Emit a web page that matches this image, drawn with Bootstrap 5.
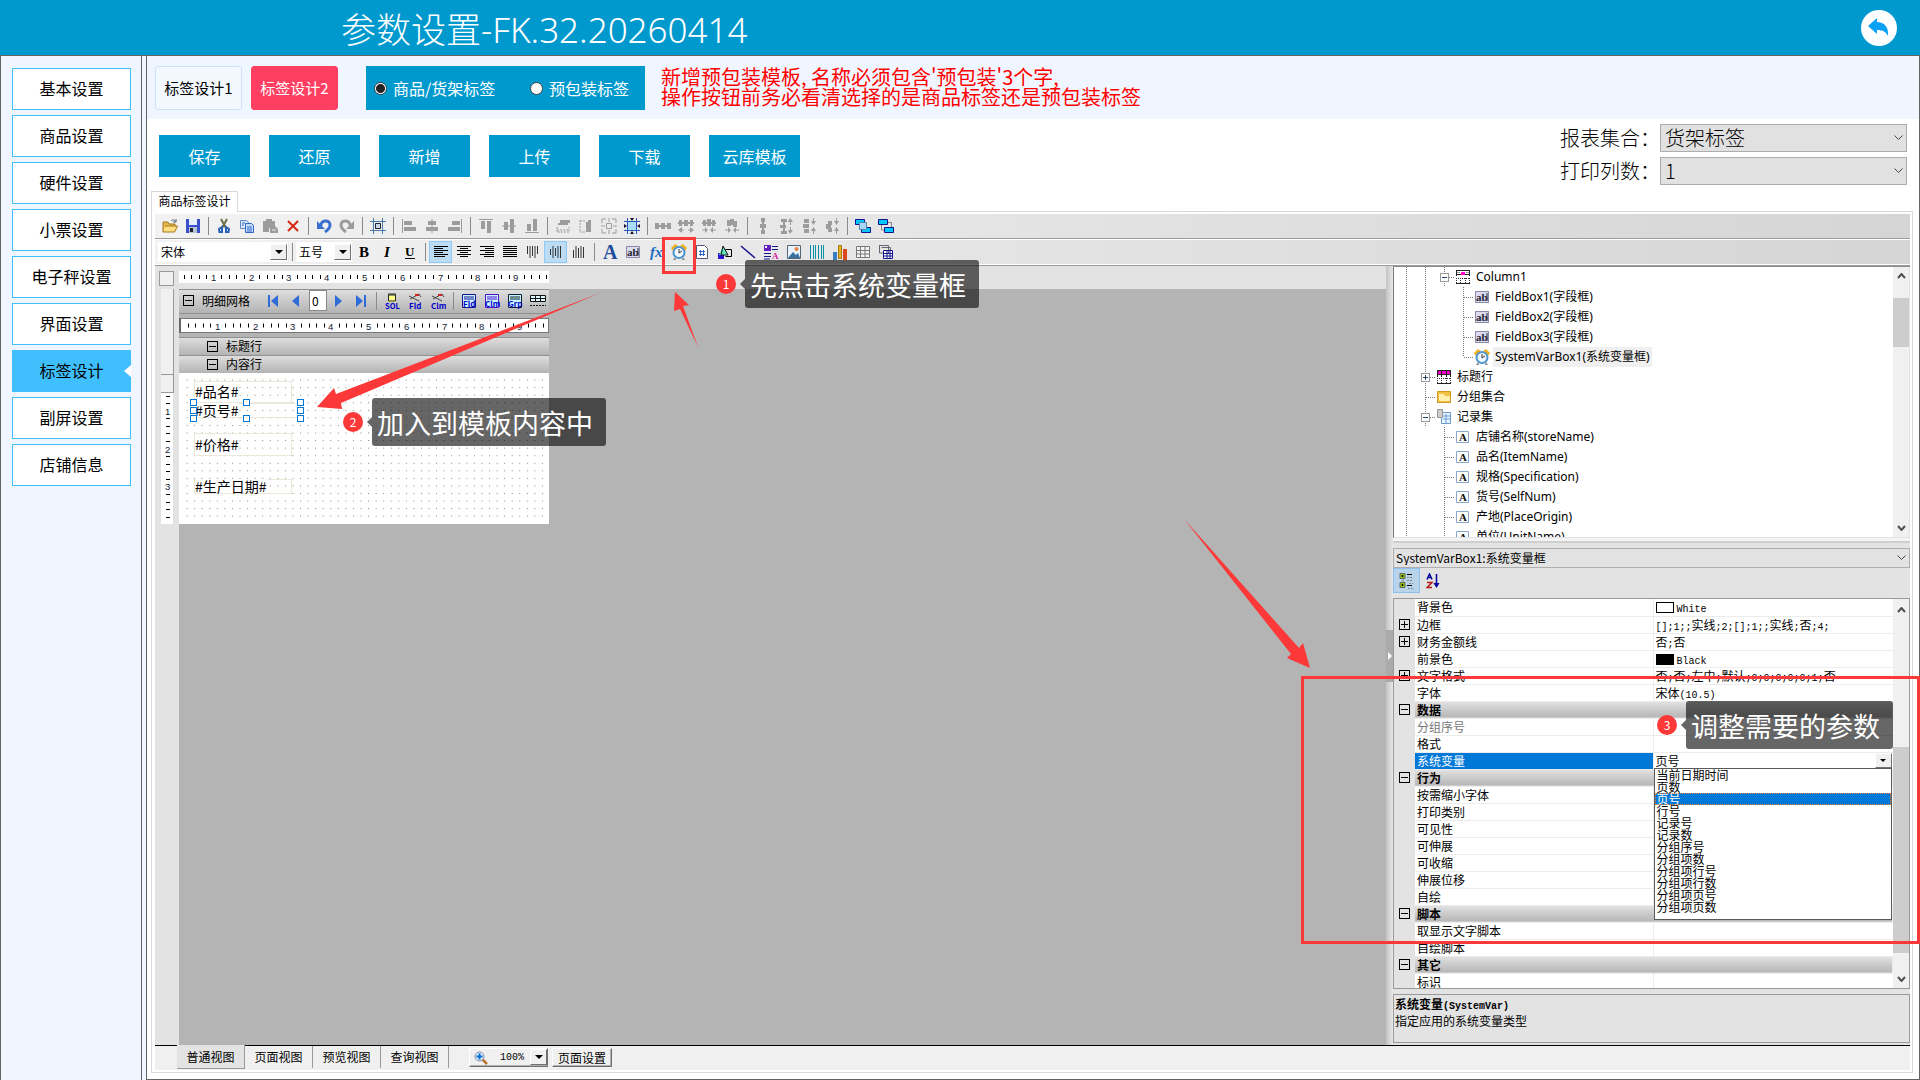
<!DOCTYPE html>
<html lang="zh-CN">
<head>
<meta charset="utf-8">
<meta name="viewport" content="width=device-width, initial-scale=1">
<title>参数设置</title>
<link rel="stylesheet" href="https://cdn.jsdelivr.net/npm/bootstrap@5.3.0/dist/css/bootstrap.min.css">
<style>
:root{--blue:#0099ce;--pale:#f0f6ff;--edge:#646464;--line:#d9d9d9;--face:#e3e3e3;--red:#fc3838}
body{font-family:"Noto Sans CJK SC",sans-serif;font-size:12px;line-height:16px;color:#000;background:var(--pale);overflow:hidden}
button,select,input{font-family:inherit;color:inherit}
button{padding:0;border:0;background:none}
svg{display:block;flex:none}
.topbar{height:56px;background:var(--blue);border-bottom:1px solid var(--edge);padding:0 23px 0 341px}
.topbar h1{font:300 35px/48px "Noto Sans","Noto Sans CJK SC",sans-serif;color:#fff;margin:4px 0 0}
.side{width:142px;background:var(--pale);border:solid var(--edge);border-width:0 1px;padding:12px 10px 0 11px;gap:5px}
.side a{height:42px;line-height:38px;border:1px solid #40bfff;background:#fff;color:#000;text-align:center;font-size:16px;text-decoration:none;width:119px;position:relative}
.side a.on{background:#40bfff}
.side a.on::after{content:"";position:absolute;right:-1px;top:14px;border:6px solid transparent;border-right:7px solid #fff;border-left:0}
.pane{margin-left:4px;border:1px solid var(--edge);border-top:0;background:#fff}
.strip{background:var(--pale);height:63px;padding:10px 8px 0}
.plan{width:87px;height:44px;border:1px solid #cfe0fb;border-radius:3px;font-size:15px;background:#f3f8ff}
.plan.on{background:#ff3f62;border-color:#ff3f62;color:#fff;margin-left:9px}
.kind{height:44px;width:279px;background:var(--blue);color:#fff;font-size:16px;margin-left:28px;padding-left:8px}
.kind label{display:flex;align-items:center;gap:6px;white-space:nowrap}
.kind input{appearance:none;width:13px;height:13px;border:1px solid #444;border-radius:50%;background:#fff;margin:0}
.kind input:checked{background:radial-gradient(#222 0 4px,#fff 5px)}
.warn{color:#f00;font-size:20px;line-height:20px;margin:1px 0 0 16px;white-space:nowrap}
.acts{gap:19px;padding:16px 0 0 12px}
.acts button{width:91px;height:42px;background:var(--blue);color:#fff;font-size:16px}
.opts{font-size:20px;font-weight:300;line-height:28px;gap:5px;padding:5px 12px 0 0}
.opts label{width:100px}
.opts .pick{width:247px;height:28px}
.pick{position:relative}
.pick select{appearance:none;width:100%;height:100%;border:1px solid #adadad;border-radius:0;background:#e1e1e1;padding:0 4px;font-size:inherit;font-weight:inherit;line-height:1.2}
.pick svg{position:absolute;right:4px;top:50%;margin-top:-3px;pointer-events:none}
.tabhead{padding-left:4px}
.tabhead a{display:block;width:87px;height:21px;border:1px solid var(--line);border-bottom:0;background:#fff;color:#000;text-decoration:none;text-align:center;line-height:18px;white-space:nowrap;margin-bottom:-1px;position:relative}
.tabbox{border:1px solid var(--line);margin:0 6px 6px 4px;padding:2px 2px 2px 3px}
.tools{height:26px;border-bottom:1px solid #9b9b9b;box-shadow:inset 0 -1px #fff;background:linear-gradient(90deg,#f2f2f2,#d5d5d5);padding:0 0 2px 3px}
.tools.r1{border-bottom:1px solid #fff;box-shadow:inset 0 -1px #9b9b9b}
.tb{width:23px;height:22px;display:flex;align-items:center;justify-content:center;flex:none}
.tb.on{background:#bcdcf4;border:1px solid #90c8f6}
.sp{width:8px;flex:none;display:flex;justify-content:center}
.sp::after{content:"";width:1px;height:18px;background:#8a8a8a}
.combo{background:#fff;height:20px;display:flex;position:relative;flex:none}
.combo select{appearance:none;border:0;background:#fff;width:100%;padding:0 3px;font-size:12px}
.arw{position:absolute;right:1px;top:2px;width:17px;height:16px;background:#f0f0f0;border:1px solid;border-color:#fff #707070 #707070 #fff;display:flex;align-items:center;justify-content:center;pointer-events:none}
.arw::after{content:"";border:4px solid transparent;border-top-color:#000;border-bottom:0}
.work{background:#b4b4b4;min-width:0}
.rtop{background:var(--face);height:23px;padding:5px 0 0 4px;gap:5px}
.corner{width:15px;height:15px;background:#f0f0f0;border:1px solid #9a9a9a}
.rail{width:24px;background:var(--face);padding:0 6px;flex:none}
.rail div{background:#f0f0f0;border:solid #9a9a9a;border-width:0 1px 1px 0;width:13px}
.report{width:370px;flex:none}
.band{background:linear-gradient(#dedede,#b3b3b3);border-top:1px solid #909090;height:18px;line-height:16px;padding:0 0 1px 28px;gap:8px}
.band.head{height:25px;padding:0 0 2px 4px;gap:0;border-bottom:1px solid #909090;overflow:hidden}
.cap{width:80px;white-space:nowrap}
.tg{width:11px;height:11px;border:1px solid #000;position:relative;flex:none;display:block;padding:0}
.tg::before,.tg.plus::after{content:"";position:absolute;background:#000;left:1px;right:1px;top:4px;height:1px}
.tg.plus::after{left:4px;right:4px;top:1px;bottom:1px;height:auto}
.rec{width:18px;height:21px;border:1px solid #888;border-radius:0;font-size:12px;padding:0 2px;line-height:14px;margin:0 -1px 0 2px}
.ruler2{background:#fff;border:1px solid #777;border-left:2px solid #666;margin:4px 0;height:15px;width:370px}
.sheet{background:#fff;height:151px;position:relative}
.fld{position:absolute;left:15px;width:98px;border:1px solid #ebe7da;font-size:14px;padding:0 0 2px;display:flex;align-items:center;line-height:14px;background:transparent}
.fld span{background:#fff}
.sheet i{position:absolute;width:7px;height:7px;border:1px solid #0078d7;background:#fff}
.vsplit{width:7px;background:linear-gradient(90deg,#c4c4c4,#e8e8e8);display:flex;align-items:center}
.side2{width:517px;background:var(--face);border-top:1px solid #8c8c8c;flex:none;padding-bottom:2px}
.tree{height:271px;background:#fff;border:1px solid #777;border-color:#777 var(--face) var(--face) #777;border-top:0;overflow:hidden}
.tree ul{margin:0;padding:0 0 0 3px;list-style:none}
.tree li{height:20px;display:flex;align-items:center;white-space:nowrap;font-family:"Noto Sans","Noto Sans CJK SC",sans-serif}
.tree .ti{margin:0 3px 0 1px;width:16px}
.tree .tx{padding:0 2px;line-height:20px}
.tree .tx.on{background:#f0f0f0}
.bar{width:16px;background:#f0f0f0;flex:none;display:flex;flex-direction:column;align-items:center;padding:6px 0}
.bar b{width:16px;background:#cdcdcd}
.hsplit{height:10px;border-top:3px solid #f4f4f4;background:linear-gradient(#cfcfcf 0 2px,var(--face) 2px)}
.side2 .pick{height:20px}
.side2 .pick select{background:#e3e3e3;padding:0 2px;font-size:12px}
.pt{height:30px}
.pt button{width:27px;height:25px;display:flex;align-items:center;justify-content:center}
.pt .on{background:#b8d4ea;border:1px solid #8cc0ee}
.props{border:1px solid #9a9a9a;background:#fff;overflow:hidden;flex:1 1 0;min-height:0;position:relative}
.props table{width:100%;table-layout:fixed;border-collapse:collapse}
.props td{height:17px;padding:0 0 0 2px;line-height:16px;border-bottom:1px solid #ececec;white-space:nowrap;overflow:visible}
.props td.g{background:var(--face);border:0;width:21px;padding-left:5px}
.props td.n{width:238px;border-right:1px solid #ececec}
.props tr.cat td.n{background:linear-gradient(#e2e2e2,#b5b5b5);font-weight:700}
.props tr.sel td.n{background:#0078d7;color:#fff}
.props tr.dim td.n{color:#777}
.lat{font-family:"Liberation Mono",monospace;font-size:10px;line-height:10px}
.sw{display:inline-block;width:18px;height:11px;border:1px solid #000;vertical-align:-1px;margin-right:3px}
.vs{position:relative;display:block;width:237px}
.vs select{appearance:none;border:0;width:100%;height:16px;padding:0;background:#fff;font-size:12px;line-height:16px;display:block}
.vs .arw{top:0;height:15px}
.vs .arw::after{border-width:3px;border-bottom:0}
.menu{position:absolute;left:-2px;top:15px;width:238px;height:152px;border:1px solid #5a5a5a;background:#fff;color:#000;margin:0;padding:0;list-style:none;z-index:2}
.menu li{height:12px;line-height:12px;padding-left:2px}
.menu li.on{background:#0078d7;color:#fff;outline:1px dotted #f08030;outline-offset:-1px}
.desc{height:49px;border:1px solid #9a9a9a;margin-top:5px;padding:0 1px;line-height:17px}
.foot{background:#f0f0f0;border-top:1px solid #000;height:25px}
.foot .vt{height:22px;width:68px;border-right:1px solid #9a9a9a;line-height:20px;margin:0}
.foot .vt.on{background:var(--face);margin:-1px 0 0 22px;height:24px;border-bottom:1px solid #9a9a9a}
.raise{background:#f0f0f0;border:1px solid;border-color:#fff #707070 #707070 #fff;height:19px;box-shadow:inset -1px -1px #b0b0b0;margin-top:2px;line-height:16px}
.notes{position:absolute;inset:0;pointer-events:none;z-index:5;overflow:hidden}
.notes>svg{position:absolute;left:0;top:0}
.frame{position:absolute;border:3px solid var(--red)}
.tip{position:absolute;display:flex;align-items:center}
.tip b{width:20px;height:20px;border-radius:50%;background:var(--red);color:#fff;font-weight:400;line-height:20px;text-align:center}
.tip::before{content:"";order:1;border:5px solid transparent;border-right-color:rgba(0,0,0,.6);border-left:0;margin-left:4px}
.tip span{order:2;height:48px;line-height:50px;border-radius:3px;background:rgba(0,0,0,.6);color:#fff;font-size:27px;padding:0 13px 0 5px;white-space:nowrap}
</style>
<script src="https://cdn.jsdelivr.net/npm/bootstrap@5.3.0/dist/js/bootstrap.bundle.min.js"></script>
</head>
<body class="vh-100 d-flex flex-column position-relative">
<header class="topbar d-flex justify-content-between align-items-center flex-shrink-0">
  <h1>参数设置-FK.32.20260414</h1>
  <button aria-label="返回"><svg width="36" height="36" viewBox="0 0 36 36"><circle cx="18" cy="18" r="18" fill="#fff"/><path d="M7 16 16 8v4c7 0 12 5 11 14-2-4-5-6-11-6v4z" fill="#0aa1f5"/></svg></button>
</header>
<main class="d-flex flex-grow-1" style="min-height:0">
  <nav class="side d-flex flex-column flex-shrink-0">
    <a href="#">基本设置</a><a href="#">商品设置</a><a href="#">硬件设置</a><a href="#">小票设置</a><a href="#">电子秤设置</a><a href="#">界面设置</a><a href="#" class="on">标签设计</a><a href="#">副屏设置</a><a href="#">店铺信息</a>
  </nav>
  <section class="pane flex-grow-1 d-flex flex-column" style="min-width:0">
    <div class="strip d-flex">
      <button class="plan">标签设计1</button><button class="plan on">标签设计2</button>
      <div class="kind d-flex" role="radiogroup">
        <label><input type="radio" name="kind" checked>商品/货架标签</label>
        <label class="ms-auto me-3"><input type="radio" name="kind">预包装标签</label>
      </div>
      <div class="warn">新增预包装模板, 名称必须包含'预包装'3个字,<br>操作按钮前务必看清选择的是商品标签还是预包装标签</div>
    </div>
    <div class="d-flex justify-content-between" style="height:72px">
      <div class="acts d-flex"><button>保存</button><button>还原</button><button>新增</button><button>上传</button><button>下载</button><button>云库模板</button></div>
      <div class="opts d-flex flex-column">
        <div class="d-flex"><label for="s1">报表集合：</label><div class="pick"><select id="s1"><option>货架标签</option></select><svg width="9" height="6"><path d="M.5.5l4 4 4-4" fill="none" stroke="#444"/></svg></div></div>
        <div class="d-flex"><label for="s2">打印列数：</label><div class="pick"><select id="s2"><option>1</option></select><svg width="9" height="6"><path d="M.5.5l4 4 4-4" fill="none" stroke="#444"/></svg></div></div>
      </div>
    </div>
    <div class="tabhead"><a href="#">商品标签设计</a></div>
    <div class="tabbox flex-grow-1 d-flex flex-column" style="min-height:0">
      <div class="tools r1 d-flex align-items-center flex-shrink-0" id="t1"></div>
      <div class="tools d-flex align-items-center flex-shrink-0">
        <div class="combo" style="width:130px"><select aria-label="字体"><option>宋体</option></select><span class="arw"></span></div>
        <span class="sp"></span>
        <div class="combo" style="width:56px"><select aria-label="字号"><option>五号</option></select><span class="arw"></span></div>
        <div class="d-flex align-items-center" id="t2"></div>
      </div>
      <div class="d-flex flex-grow-1" style="min-height:0">
        <div class="work flex-grow-1 d-flex flex-column">
          <div class="rtop d-flex"><div class="corner"></div><div id="ru1"></div></div>
          <div class="d-flex flex-grow-1">
            <div class="rail"><div style="height:86px"></div><div style="height:18px"></div><span id="ru3"></span></div>
            <div class="report">
              <div class="band head d-flex align-items-center"><button class="tg" aria-label="折叠"></button><span class="ms-2 cap">明细网格</span><span id="t3" class="d-flex align-items-center"></span></div>
              <div class="ruler2" id="ru2"></div>
              <div class="band d-flex align-items-center"><button class="tg" aria-label="折叠"></button><span>标题行</span></div>
              <div class="band d-flex align-items-center"><button class="tg" aria-label="折叠"></button><span>内容行</span></div>
              <div class="sheet">
                <svg width="370" height="151"><defs><pattern id="dots" width="7.56" height="7.56" x="7.6" y="6.6" patternUnits="userSpaceOnUse"><rect width="1" height="1" fill="#8f8880"/></pattern></defs><rect x="7" y="6" width="363" height="141" fill="url(#dots)"/></svg>
                <div class="fld" style="top:8px;height:22px"><span>#品名#</span></div>
                <div class="fld" style="top:30px;height:15px;width:107px"><span>#页号#</span></div>
                <div class="fld" style="top:60px;height:23px"><span>#价格#</span></div>
                <div class="fld" style="top:106px;height:15px"><span>#生产日期#</span></div>
                <i style="left:11px;top:26px"></i><i style="left:64px;top:26px"></i><i style="left:118px;top:26px"></i><i style="left:11px;top:34px"></i><i style="left:118px;top:34px"></i><i style="left:11px;top:42px"></i><i style="left:64px;top:42px"></i><i style="left:118px;top:42px"></i>
              </div>
            </div>
          </div>
        </div>
        <div class="vsplit"><svg width="7" height="52"><rect width="7" height="52" fill="#aaa"/><path d="M2 22v8l4-4z" fill="#fff"/></svg></div>
        <aside class="side2 d-flex flex-column">
          <div class="tree d-flex flex-shrink-0"><ul class="flex-grow-1" id="tree"></ul>
            <div class="bar justify-content-between"><svg width="9" height="6"><path d="M1 5l3.500-4 3.500 4" fill="none" stroke="#505050" stroke-width="2"/></svg><b style="height:49px;margin-bottom:160px"></b><svg width="9" height="6"><path d="M1 1l3.500 4L8 1" fill="none" stroke="#505050" stroke-width="2"/></svg></div></div>
          <div class="hsplit flex-shrink-0"></div>
          <div class="pick flex-shrink-0"><select aria-label="对象"><option>SystemVarBox1:系统变量框</option></select><svg width="9" height="6"><path d="M.5.5l4 4 4-4" fill="none" stroke="#444"/></svg></div>
          <div class="pt d-flex flex-shrink-0"><button class="on" aria-label="分类"><svg width="16" height="18"><path d="M4 3v12" stroke="#888"/><path d="M1 1.500h5v5H1zM1 10.500h5v5H1z" fill="#9c0" stroke="#666"/><path d="M2.500 4h2M3.500 3v2M2.500 13h2M3.500 12v2" stroke="#000"/><path d="M8 2.500h5M8 13.500h5" stroke="#000"/><path d="M8 5.500h6M8 8.500h6M10 11.500h4M9 16.500h5" stroke="#888" stroke-dasharray="2 1"/></svg></button>
          <button aria-label="排序"><svg width="15" height="16"><path d="M1 6.500 3.500 1 6 6.500M2 4.500h3" fill="none" stroke="#00009c" stroke-width="1.500"/><path d="M1 9.500h5l-5 5h5" fill="none" stroke="#b01818" stroke-width="1.500"/><path d="M10.500 1v12" stroke="#00009c" stroke-width="1.500" /><path d="M7.500 10h6l-3 5z" fill="#00009c"/></svg></button></div>
          <div class="props d-flex"><div class="flex-grow-1"><table><tbody id="props"></tbody></table></div>
            <div class="bar"><svg width="9" height="6" style="margin-top:2px"><path d="M1 5l3.500-4 3.500 4" fill="none" stroke="#505050" stroke-width="2"/></svg><b style="height:206px;margin-top:134px"></b><svg class="mt-auto" width="9" height="6"><path d="M1 1l3.500 4L8 1" fill="none" stroke="#505050" stroke-width="2"/></svg></div></div>
          <div class="desc flex-shrink-0"><strong>系统变量<span class="lat">(SystemVar)</span></strong><br>指定应用的系统变量类型</div>
        </aside>
      </div>
      <div class="foot d-flex flex-shrink-0 align-items-start">
        <button class="vt on">普通视图</button><button class="vt">页面视图</button><button class="vt">预览视图</button><button class="vt">查询视图</button>
        <div class="raise d-flex align-items-center position-relative" style="width:79px;margin-left:20px"><svg class="ms-1" width="14" height="14"><path d="M8 8l5 5" stroke="#b87830" stroke-width="2.500"/><circle cx="5.500" cy="5.500" r="4.500" fill="#d8ecfa" stroke="#88a"/><path d="M2.500 5.500h6M5.500 2.500v6" stroke="#0a6fd0" stroke-width="2"/></svg><span class="lat ms-2 ps-1">100%</span><span class="arw" style="top:0;right:0"></span></div>
        <button class="raise ms-1" style="width:60px">页面设置</button>
      </div>
    </div>
  </section>
</main>
<div class="notes">
  <svg width="1920" height="1080" fill="#fc3838"><path d="M675 292 689 305 683 306 698 347 680 309 674 311z"/><path d="M317 407 334 388 336 394 600 293 341 403 342 409z"/><path d="M1310 668 1303 643 1299 648 1184 519 1291 654 1287 658z"/></svg>
  <div class="frame" style="left:662px;top:237px;width:34px;height:37px"></div>
  <div class="frame" style="right:0;top:676px;width:619px;height:268px"></div>
  <div class="tip" style="left:716px;top:260px"><b>1</b><span>先点击系统变量框</span></div>
  <div class="tip" style="left:343px;top:398px"><b>2</b><span>加入到模板内容中</span></div>
  <div class="tip" style="right:27px;top:701px"><b>3</b><span>调整需要的参数</span></div>
</div>
<script>
const g='#9c9c9c',n='#14148c';
const F=(d,c)=>`<path d="${d}" fill="${c}"/>`,S=(d,c,w=1)=>`<path d="${d}" fill="none" stroke="${c}" stroke-width="${w}"/>`;
const T=(x,y,s,c,t,e='')=>`<text x="${x}" y="${y}" font-size="${s}" fill="${c}" ${e}>${t}</text>`;
const serif='font-family="Liberation Serif" font-weight="700"';
const lines=a=>a.map((w,i)=>S(`M${w[0]} ${2.5+i*2}H${w[1]}`,'#000')).join('');
const bars=(a,c='#333')=>a.map((w,i)=>S(`M${2.5+i*2.5} ${w[0]}V${w[1]}`,c)).join('');
const I={
open:F('M1 4h5l1 2h6v8H1z','#e8b84a')+F('M3 8h13l-3 6H1z','#ffdf80')+S('M3 8h12.500l-3 6H1V4h5l1 2h6v2','#a07820')+S('M9 3c2-2 4-1 5 1m0-3v3h-3','#567'),
save:F('M1 1h14v14H1z','#3a50c8')+F('M4 1h8v6H4z','#e8f0ff')+F('M4 9h8v6H4z','#b8c4d8')+F('M5 10h3v4H5z','#223'),
cut:S('M5 1l5 9M11 1 6 10','#6a7040',2)+S('M3 11l3-2v5H3.500zM13 11l-3-2v5h2.500z','#2860b8',2),
copy:F('M1 2h7l2 2v7H1z','#dce9fb')+S('M1.500 2.500h6l2 2v6h-8z','#6088c8')+F('M6 5h7l2 2v8H6z','#c4dcff')+S('M6.500 5.500h6l2 2v7h-8zM8 9h5M8 11h5M8 13h5M3 5h3M3 7h2','#3468c0'),
paste:F('M1 3h3V1h6v2h3v5h-4l-2 3v3H1z',g)+F('M8 8h5l3 3v4H8z',g)+S('M10 12h4','#eee'),
del:S('M3 3l10 10M13 3 3 13','#d82810',2),
undo:S('M5 8c-1-6 9-7 9-1 0 3-2 5-5 7','#3a70d0',3)+F('M1 3v8h8z','#3a70d0'),
redo:S('M11 8c1-6-9-7-9-1 0 3 2 5 5 7',g,3)+F('M15 3v8H7z',g),
grid:S('M3.500 0v16M12.500 0v16M0 3.500h16M0 12.500h16','#4878a8')+F('M5 5h6v6H5z','#c8d8e8')+S('M5.500 5.500h5v5h-5z','#223'),
al:S('M1.500 1v14',g)+F('M3 3h8v4H3zM3 9h12v4H3z',g), ac:S('M8 1v14',g)+F('M4 3h8v4H4zM2 9h12v4H2z',g), ar:S('M14.500 1v14',g)+F('M5 3h8v4H5zM1 9h12v4H1z',g),
at:S('M1 1.500h14',g)+F('M3 3h4v8H3zM9 3h4v12H9z',g), am:S('M1 8h14',g)+F('M3 4h4v8H3zM9 1h4v14H9z',g), ab:S('M1 14.500h14',g)+F('M3 6h4v7H3zM9 1h4v12H9z',g),
sw:F('M5 2h10v3H5zM3 5h10v2H3z',g)+S('M2 9v5h12V9M2 12h12',g).replace('/>',' stroke-dasharray="2 1"/>'),
sh:F('M10 2h3v12h-3zM8 4h2v10H8z',g)+S('M2 2v12h5M2 3h6',g).replace('/>',' stroke-dasharray="2 1"/>'),
sb:S('M1 5V1h4M11 1h4v4M15 11v4h-4M5 15H1v-4M5.500 5.500h5v5h-5zM8 0v4M8 12v4M0 8h4M12 8h4',g),
sz:F('M3 3h10v10H3z','#a8dcf8')+S('M3.500 0v16M12.500 0v16M0 3.500h16M0 12.500h16','#2858b8')+F('M6 0h4l-2 3zM6 16h4l-2-3zM0 6v4l3-2zM16 6v4l-3-2z','#113'),
h1:F('M0 5h4v6H0zM6 5h4v6H6zM12 5h4v6h-4zM0 7h16v2H0z',g),
h2:F('M1 2h3v6H1zM6 2h4v6H6zM12 2h3v6h-3zM0 4h16v2H0zM0 12l4-3v6zM16 12l-4-3v6z',g)+S('M2 12h4M10 12h4',g),
h3:F('M2 2h3v6H2zM6 1h4v7H6zM11 2h3v6h-3zM1 4h14v2H1zM7 12 4 9v6zM9 12l3-3v6z',g)+S('M1 12h5M10 12h5',g),
h4:F('M3 2h4v6H3zM6 1h4v6H6zM9 3h4v6H9zM7 12 4 9v6zM9 12l3-3v6z',g)+S('M1 12h5M10 12h5',g),
v1:F('M6 0h4v4H6zM5 6h6v4H5zM6 12h4v4H6zM7 0h2v16H7z',g),
v2:F('M3 1h6v3H3zM2 7h6v3H2zM3 13h6v3H3zM5 1h2v14H5zM10 4l2-4 3 4zM10 12l2 4 3-4z',g)+S('M12.500 2v5M12.500 9v6',g),
v3:F('M3 1h5v4H3zM2 6h6v4H2zM3 11h5v4H3zM10 3l2.500 4L15 3zM10 13l2.500-4 2.500 4z',g)+S('M12.500 0v5M12.500 11v5',g),
v4:F('M4 3h4v4H4zM2 6h5v5H2zM4 10h4v4H4zM10 3l2.500 4L15 3zM10 13l2.500-4 2.500 4z',g)+S('M12.500 0v5M12.500 11v5',g),
f1:F('M0 1h9v6H0zM7 9h9v6H7z','#00c8ff')+S('M.5 1.500h9v5h-9zM6.500 9.500h9v5h-9z',n)+F('M4 4h8v8H4z','#a8d8f8')+S('M4.500 4.500h7v7h-7z','#58a'),
f2:F('M0 1h9v6H0zM7 9h9v6H7z','#00c8ff')+S('M.5 1.500h9v5h-9zM6.500 9.500h9v5h-9z',n)+S('M10 4.500h3.500V9M3.500 7v5H6','#888'),
B:T(3,13,15,'#000','B',serif), I:T(5,13,15,'#000','I',serif+' font-style="italic"'), U:T(3,12,13,'#000','U',serif)+S('M3 14.500h10','#000'),
l:lines([[1,15],[1,10],[1,15],[1,10],[1,15],[1,12]]), c:lines([[1,15],[4,12],[1,15],[4,12],[1,15],[4,12]]), r:lines([[1,15],[6,15],[1,15],[6,15],[1,15],[5,15]]), j:lines([[1,15],[1,15],[1,15],[1,15],[1,15],[1,15]]),
vt:bars([[2,10],[2,14],[2,12],[2,14],[2,10]]), vm:bars([[5,11],[2,14],[4,12],[2,14],[2,14]]), vb:bars([[6,14],[2,14],[4,14],[2,14],[3,14]]),
A:T(1,15,20,'#1c4c9c','A',serif), ab2:F('M1 2h14v12H1z','#dcdcee')+S('M1.500 2.500h13v11h-13z','#88a')+T(2,12,11,'#223','ab',serif)+S('M13 4v8','#223'),
fx:T(2,13,15,'#1c6cc0','fx',serif+' font-style="italic"'),
clock:F('M0 4l4-4 3 2-5 5zM16 4l-4-4-3 2 5 5z','#f0b020')+F('M4 13l-2 3h3zM12 13l2 3h-3z','#888')+'<circle cx="8" cy="8.500" r="5.500" fill="#f0f8ff" stroke="#4a94d0" stroke-width="2"/>'+S('M8 5v4l3-2','#333'),
num:F('M2 1h9l3 3v11H2z','#fff')+S('M2.500 1.500h8l3 3v10h-11z','#557')+S('M6.500 6v6M9.500 6v6M5 7.500h6M5 10.500h6','#36c'),
shp:F('M1 9h6v6H1z','#3010d0')+F('M6 2l5 9H2z','#60e8c0')+S('M6 2l5 9H4z','#111')+S('M8.500 5.500h6v7h-6','#000'),
ln:S('M1 2l14 12',n,1.5), rich:F('M1 1h7v6H1z','#6020c0')+F('M2 2h2v2H2z','#fff')+S('M9 2.500h6M9 5.500h6M1 9.500h7M1 12.500h7M1 15h6',n)+T(9,15,9,'#d818a0','A',serif),
pic:F('M1 1h14v14H1z','#e8f2fa')+S('M1.500 1.500h13v13h-13z','#567')+F('M2 14l5-6 3 3 2-2 2 5z','#3870a0')+'<circle cx="10.500" cy="5" r="2" fill="#e88040"/>',
bc:S('M1.500 1v14M4.500 1v14M6.500 1v14M9.500 1v14M12.500 1v14M14.500 1v14','#0a90a8'),
ch:F('M1 8h4v8H1z','#3a80c0')+F('M6 2h4v13H6z','#e8b020')+F('M11 5h4v11h-4z','#d84818')+S('M6.500 1.500h3v13h-3z','#a87810'),
tbl:F('M1 2h14v12H1z','#f4f4f4')+S('M1.500 2.500h13v11h-13zM1 6.500h14M1 10h14M5.500 2v12M10 2v12','#777'),
sub:F('M5 6h10v9H5z','#fff')+S('M1.500 1.500h9v8M3.500 3.500h9v3M1.500 1v8H5','#667')+S('M5.500 6.500h9v8h-9zM5 9.500h10M5 12h10M9 7v8M12 7v8',n),
first:F('M3 2h2v12H3zM13 2v12L6 8z','#2f6cd8'),prev:F('M11 2v12L4 8z','#2f6cd8'),next:F('M5 2v12l7-6z','#2f6cd8'),last:F('M11 2h2v12h-2zM3 2v12l7-6z','#2f6cd8'),
sql:F('M4 2h8v7H4z','#ff8')+S('M4.500 2v6h7V2zM4 1h8','#222')+T(1,16,7.5,'#00c','SQL','font-weight="700"'),
fld:S('M2 3l10 5M3 6l9-5 2 3','#444')+F('M8 1h4v2H8z','#c22')+T(2,16,8,'#00c','Fld','font-weight="700"'),clm:S('M2 3l10 5M3 6l9-5 2 3','#444')+F('M8 1h4v2H8z','#c22')+T(1,16,8,'#00c','Clm','font-weight="700"'),
bf:F('M1 1h14v14H1z','#c8f4ff')+S('M1.500 1.500h13v13h-13zM3 4h10M3 6h10',n)+T(2,14,8,'#00c','Fld','font-weight="700"'),
bcl:F('M1 1h14v14H1z','#c8f4ff')+S('M1.500 1.500h13v13h-13zM3 4h10M3 6h10','#5010d0')+T(1,14,8,'#00c','Clm','font-weight="700"'),
bg:F('M1 1h14v14H1z','#c8f4ff')+S('M1.500 1.500h13v13h-13zM3 4h10M3 6h10','#123')+T(1,14,8,'#00c','Grp','font-weight="700"'),
gr:F('M0 2h16v7H0z','#e0f8ff')+S('M.5 2.500h15v6H.5zM5.500 2v7M10.500 2v7M0 5.500h16','#111')+S('M0 12.500h16','#111').replace('/>',' stroke-dasharray="2 1"/>'),
col:F('M1 1h14v14H1z','#fff')+S('M1 1.500h14M1 5.500h14M1.500 1v6M14.500 1v6M1 14.500h14','#222')+S('M1 9.500h14M1.500 9v6M5.500 9v6M10.500 9v6M14.500 9v6','#333').replaceAll('/>',' stroke-dasharray="1 1"/>')+F('M2 3h3v1H2zM11 3h3v1h-3z','#999')+F('M6 3h4v3H6z','#f0c'),
hd:F('M1 1h14v14H1z','#fff')+F('M1 1h14v4H1z','#f0c')+S('M1.500 1v7M14.500 1v7M1 1.500h14M1 5.500h14M1 14.500h14M5.500 1v7M10.500 1v7','#222')+S('M1 9.500h14M1.500 9v6M5.500 9v6M10.500 9v6M14.500 9v6','#333').replaceAll('/>',' stroke-dasharray="1 1"/>'),
dir:F('M1 2h14v12H1z','#f0c040')+S('M1.500 2.500h13v11h-13z','#d09820')+F('M3 5h5l1 2h5v5H3z','#fff0b0'),
rs:F('M5 3h10v12H5z','#e8f4ff')+S('M5.500 3.500h9v11h-9zM7 7h7M7 10h7M10 5v9','#6a9ad0')+F('M1 0h6v9H1z','#ccc')+S('M1.500.5h5v8h-5z','#999'),
fa:F('M1 2h13v12H1z','#fff')+S('M1.500 2.500h12v11h-12z','#88a8d0')+T(4,12,11,'#111','A',serif)};
const ic=k=>`<svg class="ti" width="16" height="16" viewBox="0 0 16 16">${I[k]}</svg>`;
const bar=(id,s,on=[])=>document.getElementById(id).innerHTML=s.split(' ').map(k=>k=='|'?'<span class="sp"></span>':k=='#'?'<input class="rec" value="0" aria-label="记录">':`<button class="tb${on.includes(k)?' on':''}" aria-label="${k}">${ic(k)}</button>`).join('');
bar('t1','open save | cut copy paste del | undo redo | grid | al ac ar | at am ab | sw sh sb sz | h1 h2 h3 h4 | v1 v2 v3 v4 | f1 f2');
bar('t2','B I U | l c r j vt vm vb | A ab2 fx clock num shp ln rich pic bc ch tbl sub',['l','vm']);
bar('t3','first prev # next last | sql fld clm | bf bcl bg gr');
/* rulers: one centimetre is 37.8 px, five divisions each */
function ruler(id,len,th,org,vert){let s='';for(let k=1;org+k*7.56<len;k++){const p=Math.round(org+k*7.56);if(p<0)continue;if(k%5==0)s+=vert?T(4,p+4,9.5,'#123',k/5):T(p-3,th/2+4,9.5,'#123',k/5);else s+=vert?F(`M5 ${p}h4v1h-4z`,'#000'):F(`M${p} ${th/2-2}h1v4h-1z`,'#000')}
document.getElementById(id).innerHTML=`<svg width="${vert?th:len}" height="${vert?len:th}" font-family="Liberation Sans"><rect width="100%" height="100%" fill="#fff"/>${s}</svg>`}
ruler('ru1',370,12,-3);ruler('ru2',366,13,-1);ruler('ru3',131,12,-20,true);
const unit=c=>{let s='';const d='stroke="#777" stroke-dasharray="1 1"';
 if('|T-+L'.includes(c))s+=`<path d="M9.500 0V${c=='L'?10:20}" ${d}/>`;
 if('T-+L'.includes(c))s+=`<path d="M10 10.500H19" ${d}/>`;
 if('+-'.includes(c))s+='<rect x="5.500" y="6.500" width="8" height="8" fill="#fff" stroke="#999"/><path d="M7 10.500h5" stroke="#246"/>'+(c=='+'?'<path d="M9.500 8v5" stroke="#246"/>':'');
 return `<svg width="19" height="20">${s}</svg>`};
document.getElementById('tree').innerHTML=[['||-','col','Column1'],['|| T','ab2','FieldBox1(字段框)'],['|| T','ab2','FieldBox2(字段框)'],['|| T','ab2','FieldBox3(字段框)'],['|| L','clock','SystemVarBox1(系统变量框)',1],['|+','hd','标题行'],['|T','dir','分组集合'],['|-','rs','记录集'],['| T','fa','店铺名称(storeName)'],['| T','fa','品名(ItemName)'],['| T','fa','规格(Specification)'],['| T','fa','货号(SelfNum)'],['| T','fa','产地(PlaceOrigin)'],['| T','fa','单位(UnitName)']]
.map(r=>`<li>${[...r[0]].map(unit).join('')}${ic(r[1])}<span class="tx${r[3]?' on':''}">${r[2]}</span></li>`).join('');
const lat=s=>s.replace(/[\x20-\x7e]+/g,'<span class="lat">$&</span>');
const menu='当前日期时间 页数 页号 行号 记录号 记录数 分组序号 分组项数 分组项行号 分组项行数 分组项页号 分组项页数'.split(' ');
const pick=`<span class="vs"><select aria-label="系统变量"><option>页号</option></select><span class="arw"></span><ul class="menu" role="listbox">${menu.map(m=>`<li role="option"${m=='页号'?' class="on"':''}>${m}</li>`).join('')}</ul></span>`;
document.getElementById('props').innerHTML=[['','背景色','<span class="sw"></span>'+lat('White')],['+','边框',lat('[];1;;实线;2;[];1;;实线;否;4;')],['+','财务金额线',lat('否;否')],['','前景色','<span class="sw bg-black"></span>'+lat('Black')],['+','文字格式',lat('否;否;左中;默认;0;0;0;0;0;1;否')],['','字体',lat('宋体(10.5)')],['-','数据'],['','分组序号','','dim'],['','格式',''],['','系统变量',pick,'sel'],['-','行为'],['','按需缩小字体',''],['','打印类别',''],['','可见性',''],['','可伸展',''],['','可收缩',''],['','伸展位移',''],['','自绘',''],['-','脚本'],['','取显示文字脚本',''],['','自绘脚本',''],['-','其它'],['','标识','']]
.map(r=>{const t=r[0]?`<button class="tg${r[0]=='+'?' plus':''}" aria-label="展开"></button>`:'';return r[2]===undefined?`<tr class="cat"><td class="g">${t}</td><td class="n" colspan="2">${r[1]}</td></tr>`:`<tr class="${r[3]||''}"><td class="g">${t}</td><td class="n">${r[1]}</td><td>${r[2]}</td></tr>`}).join('');
</script>
</body>
</html>
